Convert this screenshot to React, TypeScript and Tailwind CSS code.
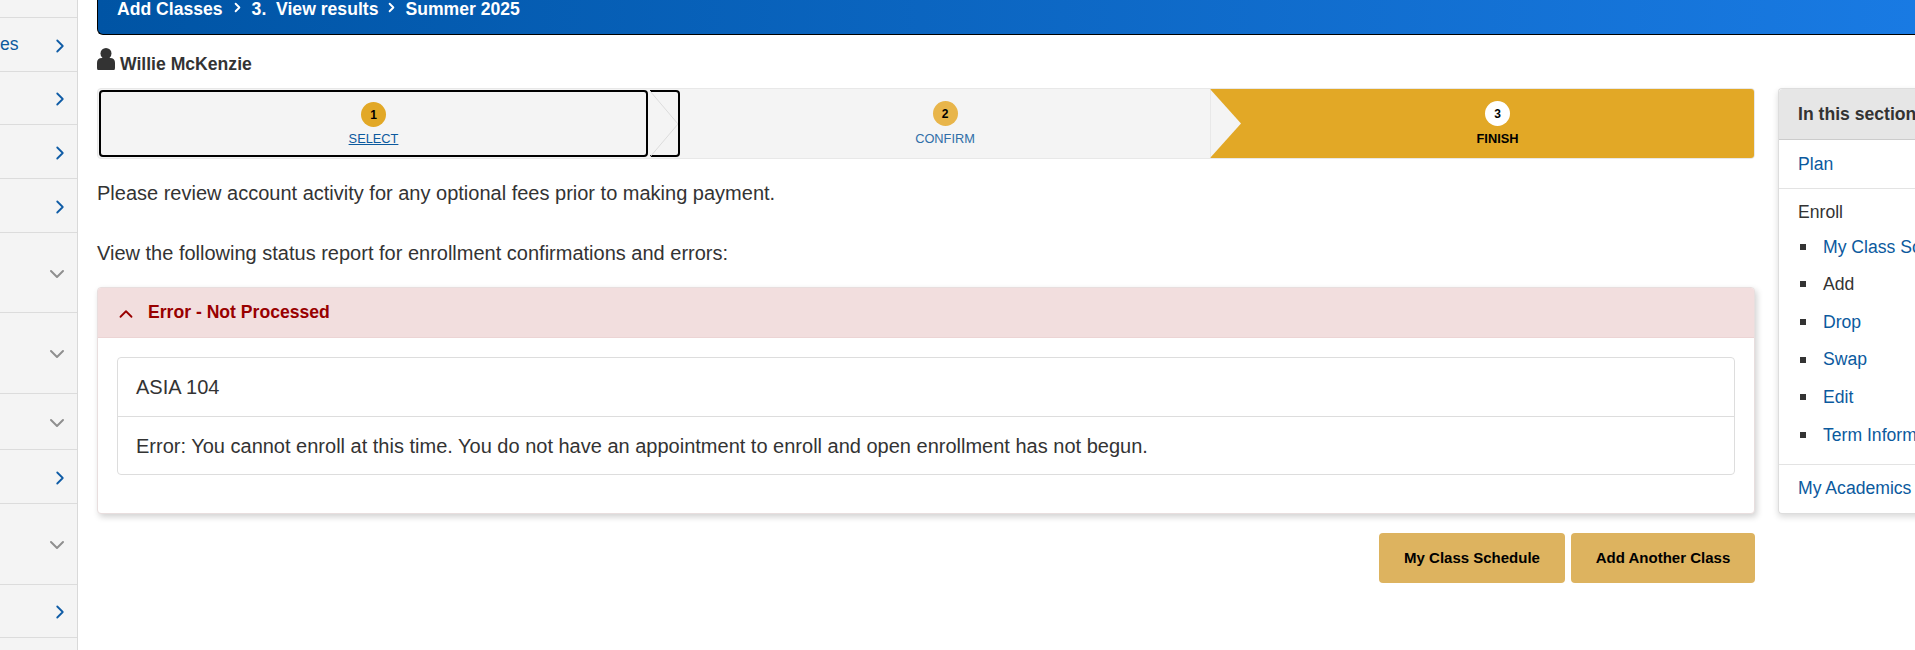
import React from "react";
import { ChevronRight, ChevronDown, ChevronUp } from "lucide-react";

const sideRows = [
    { h: "h-[18px]", icon: "" },
    { h: "h-[54px]", icon: "right", label: "es" },
    { h: "h-[53px]", icon: "right" },
    { h: "h-[54px]", icon: "right" },
    { h: "h-[54px]", icon: "right" },
    { h: "h-[80px]", icon: "down" },
    { h: "h-[81px]", icon: "down" },
    { h: "h-[56px]", icon: "down" },
    { h: "h-[54px]", icon: "right" },
    { h: "h-[81px]", icon: "down" },
    { h: "h-[53px]", icon: "right" },
];

const enrollLinks = [
    { label: "My Class Schedule", link: true },
    { label: "Add", link: false },
    { label: "Drop", link: true },
    { label: "Swap", link: true },
    { label: "Edit", link: true },
    { label: "Term Information", link: true },
];

function Sidebar() {
    return (
        <aside className="w-[78px] h-[650px] shrink-0 bg-[#f4f4f4] border-r border-[#d9d9d9] flex flex-col">
            {sideRows.map((row, index) => (
                <div key={index} className={`${row.h} shrink-0 border-b border-[#dcdcdc] flex items-center justify-between pr-[6px]`}>
                    <span className="text-[17.6px] text-[#0b5a9e]">{row.label}</span>
                    {row.icon === "right" && <ChevronRight size={22} strokeWidth={2} className="text-[#0f5ca6] mt-[2px]" />}
                    {row.icon === "down" && <ChevronDown size={24} strokeWidth={2} className="text-[#8f8f8f] mr-[2px] mt-[2px]" />}
                </div>
            ))}
        </aside>
    );
}

function Circle({ n, className }: { n: number; className: string }) {
    return (
        <div className={`w-[25px] h-[25px] rounded-full flex items-center justify-center text-[12px] font-bold text-black ${className}`}>
            {n}
        </div>
    );
}

function Stepper() {
    return (
        <div className="flex h-[71px] bg-[#f4f4f4] border border-[#e8e8e8] rounded-[4px] overflow-hidden">
            <a className="w-[549px] ml-px my-px shrink-0 border-2 border-black rounded-[4px] flex flex-col items-center pt-[10px]">
                <Circle n={1} className="bg-[#e2a826]" />
                <span className="mt-[2px] text-[12.8px] font-medium underline text-[#0b5a9e]">SELECT</span>
            </a>
            <div className="relative w-[30px] ml-[2px] my-px shrink-0 border-2 border-l-0 border-black rounded-r-[4px]">
                <svg className="absolute left-0 -top-[2px]" width="28" height="67" viewBox="0 0 28 67" fill="none">
                    <path d="M0 1 L28 34 L0 67" stroke="#dcdcdc" strokeWidth="1" />
                </svg>
            </div>
            <div className="w-[530px] shrink-0 flex flex-col items-center pt-[12px]">
                <Circle n={2} className="bg-[#e8b54a]" />
                <span className="mt-[3px] text-[12.8px] font-medium text-[#2f6ea8]">CONFIRM</span>
            </div>
            <div className="relative flex-1 bg-[#e2a826] flex flex-col items-center pt-[12px] pl-[31px]">
                <svg className="absolute left-0 top-0" width="32" height="69" viewBox="0 0 32 69">
                    <path d="M0 0 L31 34.5 L0 69 Z" fill="#f4f4f4" />
                    <path d="M0 0 L0 69" stroke="#dcdcdc" strokeWidth="1" />
                </svg>
                <Circle n={3} className="bg-white" />
                <span className="mt-[3px] text-[12.8px] font-bold text-black">FINISH</span>
            </div>
        </div>
    );
}

function ErrorPanel() {
    return (
        <div className="mt-[22px] h-[227px] bg-white border border-[#e8dede] rounded-[4px] shadow-[2px_3px_6px_rgba(0,0,0,0.18)] overflow-hidden">
            <div className="h-[50px] bg-[#f2dede] border-b border-[#ecd4d4] flex items-center pl-[17px]">
                <ChevronUp size={22} strokeWidth={2} className="text-[#990000] mt-[3px]" />
                <span className="ml-[11px] text-[17.6px] font-bold text-[#990000]">Error - Not Processed</span>
            </div>
            <div className="mt-[19px] mx-[19px] border border-[#dddddd] rounded-[4px] text-[20px] text-[#333333]">
                <div className="h-[59px] border-b border-[#dddddd] flex items-center pl-[18px]">ASIA 104</div>
                <div className="h-[57px] flex items-center pl-[18px]">
                    Error: You cannot enroll at this time. You do not have an appointment to enroll and open enrollment has not begun.
                </div>
            </div>
        </div>
    );
}

function SectionNav() {
    return (
        <div className="w-[240px] h-[426px] ml-[23px] mt-[53px] shrink-0 bg-white border border-[#dddddd] border-r-0 rounded-l-[4px] shadow-[0_3px_6px_rgba(0,0,0,0.15)] text-[17.6px]">
            <div className="h-[51px] bg-[#e6e6e6] border-b border-[#cccccc] rounded-tl-[4px] flex items-center pl-[19px] font-bold text-[#333333] whitespace-nowrap">
                In this section
            </div>
            <div className="h-[49px] border-b border-[#e3e3e3] flex items-center pl-[19px] text-[#0b5a9e]">Plan</div>
            <div className="h-[276px] border-b border-[#e3e3e3] pl-[19px] pt-[11px] text-[#333333]">
                <div className="h-[24px] flex items-center">Enroll</div>
                <ul className="mt-[4px]">
                    {enrollLinks.map((item) => (
                        <li key={item.label} className="h-[37.6px] flex items-center whitespace-nowrap">
                            <span className="w-[6px] h-[6px] bg-[#333333] ml-[2px] mr-[17px] shrink-0" />
                            <span className={item.link ? "text-[#0b5a9e]" : "text-[#333333]"}>{item.label}</span>
                        </li>
                    ))}
                </ul>
            </div>
            <div className="h-[47px] flex items-center pl-[19px] text-[#0b5a9e] whitespace-nowrap">My Academics</div>
        </div>
    );
}

export default function App() {
    return (
        <div className="w-[1915px] h-[650px] overflow-hidden flex bg-white text-[#333333] font-['Liberation_Sans',Arial,sans-serif]">
            <Sidebar />
            <main className="flex-1 min-w-0 pl-[19px]">
                <div className="w-[1900px] h-[35px] border-l border-b border-black rounded-bl-[6px] bg-gradient-to-r from-[#0054a4] to-[#1a7ce6] pl-[19px] flex items-start text-white text-[17.6px] font-bold leading-[18px] whitespace-nowrap">
                    <span>Add Classes</span>
                    <ChevronRight size={15} strokeWidth={3} className="mx-[7px]" />
                    <span>3.&nbsp; View results</span>
                    <ChevronRight size={15} strokeWidth={3} className="mx-[6px]" />
                    <span>Summer 2025</span>
                </div>
                <div className="flex">
                    <div className="w-[1658px] shrink-0">
                        <div className="h-[53px] flex items-start pt-[13px]">
                            <svg width="18" height="22" viewBox="0 0 18 22" fill="#333333">
                                <circle cx="9" cy="5.5" r="5.5" />
                                <path d="M1 22 Q0 22 0 20 L0 15 Q0 10 5 10 L13 10 Q18 10 18 15 L18 20 Q18 22 17 22 Z" />
                            </svg>
                            <span className="ml-[5px] mt-[4px] text-[17.6px] leading-[24px] font-bold text-[#333333]">Willie McKenzie</span>
                        </div>
                        <Stepper />
                        <p className="mt-[22px] text-[20px] leading-[24px]">Please review account activity for any optional fees prior to making payment.</p>
                        <p className="mt-[36px] text-[20px] leading-[24px]">View the following status report for enrollment confirmations and errors:</p>
                        <ErrorPanel />
                        <div className="mt-[19px] flex justify-end gap-[6px]">
                            <button className="w-[186px] h-[50px] bg-[#ddb35f] rounded-[4px] text-[15px] font-bold text-black">My Class Schedule</button>
                            <button className="w-[184px] h-[50px] bg-[#ddb35f] rounded-[4px] text-[15px] font-bold text-black">Add Another Class</button>
                        </div>
                    </div>
                    <SectionNav />
                </div>
            </main>
        </div>
    );
}
